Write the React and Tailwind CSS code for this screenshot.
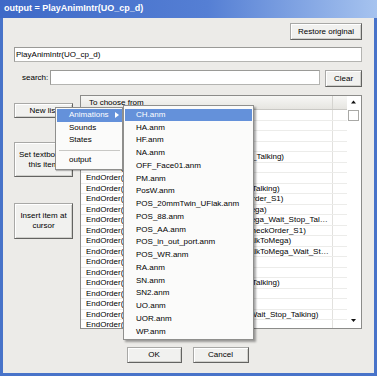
import React from "react";

//menu-data
const animations = [
  "CH.anm",
  "HA.anm",
  "HF.anm",
  "NA.anm",
  "OFF_Face01.anm",
  "PM.anm",
  "PosW.anm",
  "POS_20mmTwin_UFlak.anm",
  "POS_88.anm",
  "POS_AA.anm",
  "POS_in_out_port.anm",
  "POS_WR.anm",
  "RA.anm",
  "SN.anm",
  "SN2.anm",
  "UO.anm",
  "UOR.anm",
  "WP.anm",
];

//list-data
const rows = [
  "EndOrder(UO_cp_d_Start)",
  "EndOrder(UO_cp_d_Mega_Start)",
  "EndOrder(UO_cp_d_Wait)",
  "EndOrder(UO_cp_d_Mega_Stop)",
  "EndOrder(UO_cp_d_Mega_Wait_Orders_Start_Talking)",
  "EndOrder(UO_cp_d_Mega_Talking)",
  "EndOrder(UO_cp_d_Stop_Talking)",
  "EndOrder(UO_cp_d_Mega_Wait_Order_Stop_Talking)",
  "EndOrder(UO_cp_d_Mega_Talk_End_CheckOrder_S1)",
  "EndOrder(UO_cp_d_Stop_Talk_Wait_TalkToMega)",
  "EndOrder(UO_cp_d_Stop_Talk_Wait_TalkToMega_Wait_Stop_Talking)",
  "EndOrder(UO_cp_d_Mega_Wait_Stop_End_CheckOrder_S1)",
  "EndOrder(UO_cp_d_Mega_Wait_Stop_End_TalkToMega)",
  "EndOrder(UO_cp_d_Mega_Wait_Stop_End_TalkToMega_Wait_Stop_Talking)",
  "EndOrder(UO_cp_d_Mega_Start)",
  "EndOrder(UO_cp_d_Wait_Talking)",
  "EndOrder(UO_cp_d_Mega_Wait_Order_Stop_Talking)",
  "EndOrder(UO_cp_d_Start)",
  "EndOrder(UO_cp_d_Mega_Wait)",
  "EndOrder(UO_cp_d_Mega_Wait_Order_End_Wait_Stop_Talking)",
  "EndOrder(UO_cp_d_Stop)",
];

function Btn({ className = "", children }) {
  return (
    <div
      className={
        "flex items-center justify-center text-center bg-[#f1f1ef] border border-t-[#a8a8a6] border-l-[#a8a8a6] border-b-[#636361] border-r-[#636361] shadow-[inset_1px_1px_0_#ffffff,inset_-1px_-1px_0_#d0d0cc] text-[8px] leading-[10px] text-black " +
        className
      }
    >
      {children}
    </div>
  );
}

function App() {
  return (
    <div className="w-[377px] h-[376px] bg-[#4873c9] flex flex-col font-['Liberation_Sans',Arial,sans-serif] overflow-hidden">
      {/* title */}
      <div className="h-[18px] shrink-0 flex items-center pl-[4px] bg-[linear-gradient(to_right,#3e69c7,#557fd4_55%,#a6c3ef)] text-white font-bold text-[9px]">
        output = PlayAnimIntr(UO_cp_d)
      </div>

      {/* body */}
      <div className="relative flex-1 mx-[3px] mb-[3px] bg-[#ecebe8] flex flex-col pl-[11px] pr-[12px] pt-[5px]">
        <Btn className="self-end w-[72px] h-[17px]">Restore original</Btn>

        <div className="mt-[7px] h-[15px] bg-white border border-[#b4b4b1] border-t-[#9a9a97] border-l-[#9a9a97] flex items-center pl-[1px] text-[8px] text-black">
          PlayAnimIntr(UO_cp_d)
        </div>

        {/* search */}
        <div className="mt-[8px] h-[17px] flex items-start">
          <span className="ml-[8px] mt-[3px] text-[8px] leading-[10px] text-black">
            search:
          </span>
          <div className="ml-[2px] w-[270px] h-[15px] bg-white border border-[#b4b4b1] border-t-[#9a9a97] border-l-[#9a9a97]" />
          <Btn className="ml-auto w-[37px] h-[17px]">Clear</Btn>
        </div>

        {/* main */}
        <div className="mt-[8px] h-[234px] flex gap-[7px]">
          <div className="w-[59px] shrink-0 flex flex-col pt-[8px]">
            <Btn className="h-[15px]">New list</Btn>
            <Btn className="mt-[24px] h-[35px] px-[2px]">
              Set textbox to
              <br />
              this item
            </Btn>
            <Btn className="mt-[26px] h-[36px] px-[2px]">
              Insert item at
              <br />
              cursor
            </Btn>
          </div>

          <div className="flex-1 bg-white border border-[#8c8c8a] flex overflow-hidden">
            <div className="w-[266px] flex flex-col">
              <div className="h-[14px] shrink-0 flex bg-[linear-gradient(#f7f7f5,#e6e5e1)] border-b border-[#c9c8c4]">
                <div className="w-[252px] border-r border-[#d5d4d0] pl-[8px] text-[8px] leading-[13px] text-black">
                  To choose from
                </div>
              </div>
              {rows.map((row, i) => (
                <div
                  key={i}
                  className="h-[10.5px] shrink-0 flex border-b border-[#ececea]"
                >
                  <div className="w-[252px] border-r border-[#e2e1de] pl-[5px] pr-[3px] text-[8px] leading-[10px] text-black truncate">
                    {row}
                  </div>
                </div>
              ))}
            </div>

            {/* scrollbar */}
            <div className="w-[13px] flex flex-col items-center">
              <svg width="13" height="13" viewBox="0 0 13 13">
                <path d="M4 7.5 L9 7.5 L6.5 4.5 Z" fill="#111" />
              </svg>
              <div className="mt-[1px] w-[11px] h-[11px] bg-white border border-[#a9a9a6]" />
              <div className="flex-1" />
              <svg width="13" height="13" viewBox="0 0 13 13" className="mb-[1px]">
                <path d="M4 5 L9 5 L6.5 8 Z" fill="#111" />
              </svg>
            </div>
          </div>
        </div>

        {/* footer */}
        <div className="mt-[18px] flex justify-center gap-[11px] pr-[1px]">
          <Btn className="w-[55px] h-[16px]">OK</Btn>
          <Btn className="w-[56px] h-[16px]">Cancel</Btn>
        </div>

        {/* context menu */}
        <div className="absolute left-[52px] top-[89px] w-[68px] h-[63px] bg-[#fbfbfa] border border-[#8f8f8d] pt-[1px] pl-[1px] shadow-[1px_1px_1px_rgba(0,0,0,0.25)] text-[8px] text-black">
          <div className="h-[12.5px] flex items-center justify-between pl-[12px] pr-[3px] bg-[#6491da] text-white">
            Animations
            <svg width="4" height="6" viewBox="0 0 4 6">
              <path d="M0 0 L4 3 L0 6 Z" fill="#fff" />
            </svg>
          </div>
          <div className="h-[12.5px] flex items-center pl-[12px]">Sounds</div>
          <div className="h-[12.5px] flex items-center pl-[12px]">States</div>
          <div className="h-[7px] flex items-center px-[2px]">
            <div className="w-full h-px bg-[#c8c8c5]" />
          </div>
          <div className="h-[12.5px] flex items-center pl-[12px]">output</div>
        </div>

        {/* submenu */}
        <div className="absolute left-[120px] top-[87px] w-[131px] h-[235px] bg-[#fbfbfa] border border-[#8f8f8d] pt-[2.5px] px-[1px] shadow-[2px_2px_2px_rgba(0,0,0,0.35)] text-[8px] text-black">
          {animations.map((name, i) => (
            <div
              key={name}
              className={
                i === 0
                  ? "h-[12.75px] flex items-center pl-[11px] bg-[#6491da] text-white"
                  : "h-[12.75px] flex items-center pl-[11px]"
              }
            >
              {name}
            </div>
          ))}
        </div>
      </div>
    </div>
  );
}

export default App;
